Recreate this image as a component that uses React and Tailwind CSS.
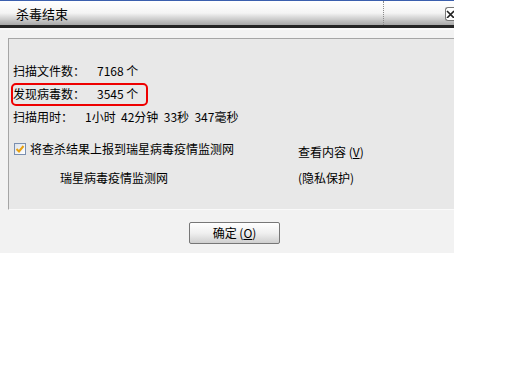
export default function App() {
  const font = { fontFamily: '"SimSun", "Noto Sans CJK SC", sans-serif' };
  return (
    <div className="w-[512px] h-[384px] bg-white overflow-hidden" style={font}>
      <div className="w-[454px] h-[253px] flex flex-col bg-[#f2f2f2] text-[12px] text-black">
        {/* title bar */}
        <div className="h-[25px] flex items-stretch border-t border-[#3b5fae] bg-gradient-to-b from-[#ffffff] via-[#f4f4f4] to-[#a9a9a9]">
          <div className="flex-1 flex items-center pl-[16px] text-[13px] leading-none">杀毒结束</div>
          <div className="w-0 border-l border-dotted border-[#8a8a8a]" />
          <div className="w-[70px] flex items-start justify-end pt-[6px]">
            <div className="w-[9px] h-[14px] border border-r-0 border-[#777] rounded-l-[3px] bg-white flex items-center justify-end overflow-hidden">
              <svg width="8" height="8" viewBox="0 0 8 8">
                <path d="M1 1 L8 8 M8 1 L1 8" stroke="#222" strokeWidth="1.6" />
              </svg>
            </div>
          </div>
        </div>
        <div className="h-[3px] bg-[#262626]" />
        <div className="h-[2px] bg-[#fbfbfb]" />
        <div className="flex-1 flex flex-col pt-[8px] pl-[8px]">
          {/* panel */}
          <div className="h-[172px] bg-[#e8e8e8] border-t border-l border-[#a5a5a5] border-b border-b-[#fafafa] flex flex-col">
            <div className="flex flex-col pt-[26px] pl-[4px] gap-[11px]">
              <div className="flex items-center h-[12px] leading-none">
                <span className="w-[84px]">扫描文件数：</span>
                <span>7168 个</span>
              </div>
              <div className="flex items-center h-[12px] leading-none relative">
                <span className="w-[84px]">发现病毒数：</span>
                <span>3545 个</span>
                <div className="absolute left-[-2px] top-[-5px] w-[137px] h-[23px] border-2 border-[#ee0000] rounded-[5px]" />
              </div>
              <div className="flex items-center h-[12px] leading-none">
                <span className="w-[72px]">扫描用时：</span>
                <span className="whitespace-pre">1小时  42分钟  33秒  347毫秒</span>
              </div>
            </div>
            <div className="flex mt-[19px] pl-[5px]">
              <div className="w-[284px] flex flex-col">
                <div className="flex items-center h-[14px] leading-none">
                  <div className="w-[12px] h-[12px] border border-[#7a8fb0] bg-gradient-to-br from-[#dde3ea] to-[#ffffff] flex items-center justify-center mr-[4px]">
                    <svg width="10" height="10" viewBox="0 0 10 10">
                      <path d="M1.5 5 L4 7.5 L8.5 2" fill="none" stroke="#e8a010" strokeWidth="2" />
                    </svg>
                  </div>
                  <span>将查杀结果上报到瑞星病毒疫情监测网</span>
                </div>
                <div className="pl-[46px] mt-[16px] leading-none">瑞星病毒疫情监测网</div>
              </div>
              <div className="flex flex-col pt-[4px]">
                <div className="leading-none">查看内容 (<span className="underline">V</span>)</div>
                <div className="leading-none mt-[14px]">(隐私保护)</div>
              </div>
            </div>
          </div>
          <div className="flex-1 flex items-start pl-[181px] pt-[12px]">
            <button className="w-[91px] h-[22px] border border-[#777] rounded-[2px] bg-gradient-to-b from-[#ffffff] via-[#f0f0f0] to-[#cfcfcf] text-[12px] leading-none flex items-center justify-center">
              确定 (<span className="underline">O</span>)
            </button>
          </div>
        </div>
      </div>
    </div>
  );
}
